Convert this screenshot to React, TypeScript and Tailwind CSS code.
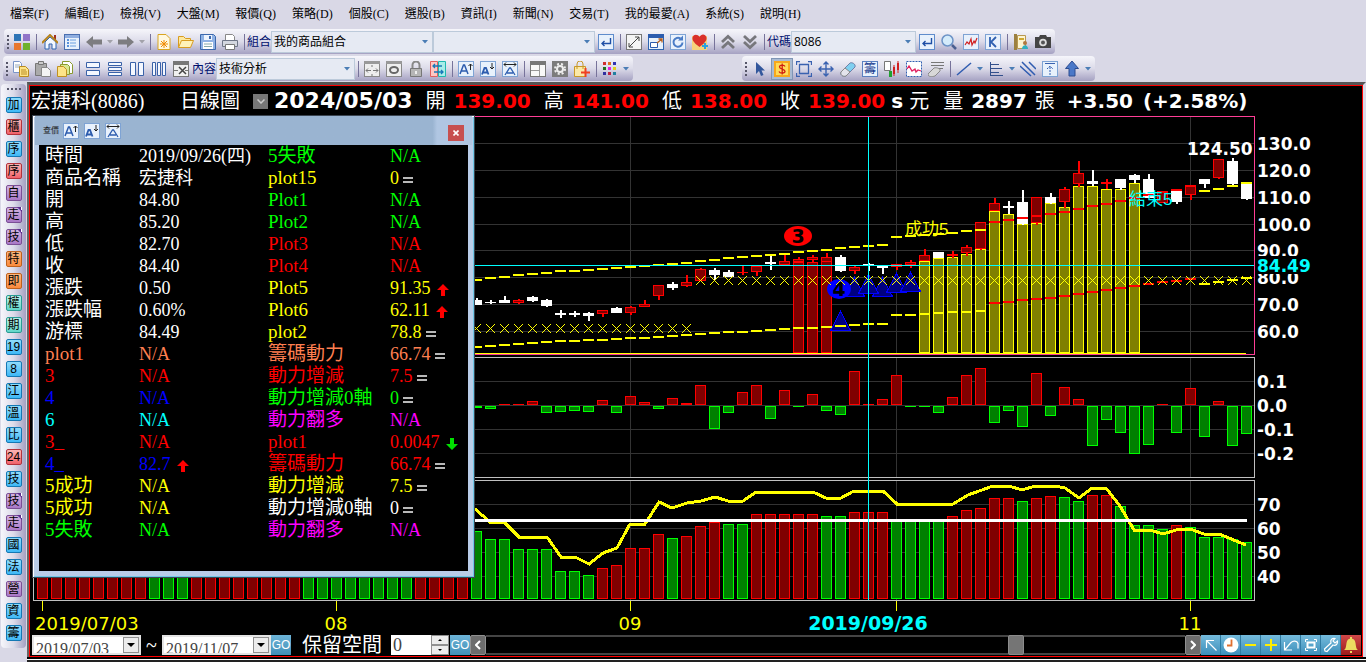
import { useState } from "react";
import type { ReactNode } from "react";

type Row = {
  label: string;
  value: string;
  color: string;
  mark?: "up" | "down" | "same";
};

const menus = [
  "檔案(F)", "編輯(E)", "檢視(V)", "大盤(M)", "報價(Q)", "策略(D)", "個股(C)",
  "選股(B)", "資訊(I)", "新聞(N)", "交易(T)", "我的最愛(A)", "系統(S)", "說明(H)",
];

const tones = {
  blue: "border-[#1478b4] from-[#8edcfb] to-[#3cb8f6]",
  red: "border-[#b4323c] from-[#f9b4b4] to-[#f0606a]",
  purple: "border-[#7b4f96] from-[#d3b4e0] to-[#a877c6]",
  orange: "border-[#c0611c] from-[#fdb880] to-[#fa8a3c]",
  teal: "border-[#2a9c94] from-[#b8f0e8] to-[#60d6c8]",
};

const sideItems: { text: string; tone: keyof typeof tones; tag?: boolean }[] = [
  { text: "加", tone: "blue" },
  { text: "櫃", tone: "red" },
  { text: "序", tone: "blue" },
  { text: "序", tone: "red" },
  { text: "自", tone: "purple" },
  { text: "走", tone: "purple", tag: true },
  { text: "技", tone: "purple", tag: true },
  { text: "特", tone: "orange" },
  { text: "即", tone: "orange" },
  { text: "權", tone: "teal" },
  { text: "期", tone: "teal" },
  { text: "19", tone: "blue" },
  { text: "8", tone: "blue" },
  { text: "江", tone: "blue" },
  { text: "溫", tone: "blue" },
  { text: "比", tone: "blue" },
  { text: "24", tone: "red" },
  { text: "技", tone: "blue" },
  { text: "技", tone: "purple", tag: true },
  { text: "走", tone: "purple", tag: true },
  { text: "國", tone: "blue" },
  { text: "法", tone: "blue" },
  { text: "營", tone: "purple" },
  { text: "資", tone: "blue" },
  { text: "籌", tone: "blue" },
];

const white = "text-white";
const yellow = "text-[#ffff00]";
const green = "text-[#00ff00]";
const red = "text-[#ff0000]";
const blue = "text-[#0000ff]";
const coral = "text-[#ff7f50]";
const magenta = "text-[#ff00ff]";

const leftRows: Row[] = [
  { label: "時間", value: "2019/09/26(四)", color: white },
  { label: "商品名稱", value: "宏捷科", color: white },
  { label: "開", value: "84.80", color: white },
  { label: "高", value: "85.20", color: white },
  { label: "低", value: "82.70", color: white },
  { label: "收", value: "84.40", color: white },
  { label: "漲跌", value: "0.50", color: white },
  { label: "漲跌幅", value: "0.60%", color: white },
  { label: "游標", value: "84.49", color: white },
  { label: "plot1", value: "N/A", color: coral },
  { label: "3", value: "N/A", color: red },
  { label: "4", value: "N/A", color: blue },
  { label: "6", value: "N/A", color: "text-[#00ffff]" },
  { label: "3_", value: "N/A", color: red },
  { label: "4_", value: "82.7", color: blue, mark: "up" },
  { label: "5成功", value: "N/A", color: yellow },
  { label: "5成功", value: "N/A", color: yellow },
  { label: "5失敗", value: "N/A", color: green },
];

const rightRows: Row[] = [
  { label: "5失敗", value: "N/A", color: green },
  { label: "plot15", value: "0", color: yellow, mark: "same" },
  { label: "Plot1", value: "N/A", color: green },
  { label: "Plot2", value: "N/A", color: green },
  { label: "Plot3", value: "N/A", color: red },
  { label: "Plot4", value: "N/A", color: red },
  { label: "Plot5", value: "91.35", color: yellow, mark: "up" },
  { label: "Plot6", value: "62.11", color: yellow, mark: "up" },
  { label: "plot2", value: "78.8", color: yellow, mark: "same" },
  { label: "籌碼動力", value: "66.74", color: coral, mark: "same" },
  { label: "動力增減", value: "7.5", color: red, mark: "same" },
  { label: "動力增減0軸", value: "0", color: green, mark: "same" },
  { label: "動力翻多", value: "N/A", color: magenta },
  { label: "plot1", value: "0.0047", color: red, mark: "down" },
  { label: "籌碼動力", value: "66.74", color: red, mark: "same" },
  { label: "動力增減", value: "7.5", color: yellow, mark: "same" },
  { label: "動力增減0軸", value: "0", color: white, mark: "same" },
  { label: "動力翻多", value: "N/A", color: magenta },
];

// one bar every 14 units, the first visible one is at x = 476
const START = 476;
const STEP = 14;
const xAt = (i: number) => START + i * STEP;

// W = down (white), R = up (red): body top, body bottom, high, low
const candles: [string, number, number, number, number][] = [
  ["W", 300, 305, 298, 305], ["W", 302, 303, 300, 304], ["W", 300, 303, 296, 303],
  ["R", 300, 303, 299, 304], ["W", 297, 301, 296, 302], ["W", 300, 306, 299, 307],
  ["W", 313, 315, 310, 318], ["W", 313, 315, 311, 317], ["W", 313, 316, 312, 321],
  ["R", 310, 314, 310, 317], ["W", 308, 313, 307, 313], ["R", 307, 313, 306, 315],
  ["R", 304, 307, 300, 307], ["R", 285, 296, 285, 300], ["W", 284, 288, 282, 290],
  ["R", 282, 286, 275, 287], ["R", 269, 281, 268, 281], ["W", 270, 275, 268, 280],
  ["W", 272, 277, 270, 277], ["R", 272, 273, 265, 275], ["R", 266, 272, 266, 276],
  ["W", 262, 264, 256, 270], ["R", 261, 265, 255, 266], ["R", 259, 262, 257, 263],
  ["R", 257, 260, 255, 262], ["R", 257, 262, 253, 262], ["W", 257, 271, 255, 272],
  ["R", 267, 271, 266, 274], ["W", 264, 266, 263, 271], ["W", 265, 268, 265, 274],
  ["R", 264, 267, 264, 270], ["R", 262, 265, 260, 268], ["R", 255, 261, 249, 261],
  ["W", 252, 258, 252, 258], ["R", 254, 256, 251, 258], ["R", 247, 253, 245, 256],
  ["R", 222, 249, 222, 250], ["R", 203, 211, 198, 211], ["W", 206, 208, 201, 214],
  ["W", 202, 224, 190, 225], ["R", 197, 223, 197, 225], ["W", 197, 203, 193, 204],
  ["R", 189, 202, 187, 208], ["R", 173, 184, 161, 187], ["W", 181, 184, 170, 186],
  ["R", 182, 184, 179, 189], ["W", 179, 188, 179, 190], ["W", 175, 180, 174, 183],
  ["W", 179, 198, 174, 198], ["R", 191, 203, 191, 203], ["W", 191, 202, 191, 204],
  ["R", 185, 195, 185, 200], ["W", 179, 184, 179, 188], ["R", 159, 178, 159, 179],
  ["W", 161, 184, 158, 185], ["W", 182, 199, 182, 200],
];

const upperBand = [
  280, 278, 277, 275, 274, 273, 271, 271, 270, 269, 268, 267, 266, 265, 264, 263, 261, 260, 258,
  257, 256, 255, 254, 252, 251, 250, 248, 247, 246, 245, 237, 236, 235, 234, 233, 231, 230, 222,
  220, 218, 216, 214, 212, 209, 206, 204, 201, 198, 195, 192, 190, 186, 191, 189, 186, 183,
];
const lowerBand = [
  347, 346, 345, 344, 343, 342, 341, 341, 340, 340, 339, 338, 338, 337, 336, 335, 334, 333, 332,
  332, 331, 330, 329, 328, 328, 327, 326, 325, 324, 324, 315, 315, 314, 313, 312, 312, 311, 303,
  302, 300, 299, 298, 296, 294, 292, 290, 288, 286, 284, 282, 281, 279, 284, 282, 280, 278,
];
const bandColor = (i: number) => (i >= 37 && i <= 51 ? "#ff0000" : "#ffff00");

const redZone: [number, number][] = [[798, 262], [812, 262], [826, 257]];
const yellowZone = [261, 258, 257, 254, 249, 211, 214, 224, 223, 203, 207, 186, 186, 189, 189, 183];

const triangles: [number, number][] = [[854, 277], [882, 277], [868, 274], [896, 273], [910, 272], [840, 311]];

const delta = [
  -3, -4, 1, 1, 4, -8, -7, -6, -7, 5, -8, 9, 3, -4, 7, 2, 20, -24, -8, 13, 20, -14, 15, -2, 11, -6,
  -10, 34, 1, 6, 30, -2, -2, -8, 8, 30, 37, -18, -6, -22, 32, -11, 18, 6, -41, -15, -28, -49, -40,
  1, -28, 17, -32, 4, -41, -29,
];

const powerTops = [
  531, 539, 539, 549, 549, 549, 571, 571, 575, 568, 565, 548, 548, 534, 538, 536, 526, 522, 524,
  524, 514, 514, 514, 514, 514, 516, 516, 512, 512, 512, 521, 521, 521, 521, 516, 510, 508, 498,
  498, 501, 498, 496, 497, 501, 495, 495, 506, 525, 525, 529, 525, 527, 537, 537, 539, 542,
];
const powerColors = "GGGGGGGGGRRRRRGRRRGGRRRRRGGRRRGGGGRRRRRGRRGGRRGGGGRGGGGG";
const earlyColors = "RRRRRRRRGGGRRRRRRRRGGGGGGGGRRRR";

const powerLine =
  "475,509 490,522 504,522 519,537 547,537 561,557 575,557 589,564 603,553 617,548 630,524 645,524 659,502 672,508 687,503 701,501 715,497 728,501 743,501 756,492 813,492 826,498 841,498 854,491 883,491 897,504 953,504 968,495 993,486 1009,486 1022,490 1035,486 1055,486 1065,488 1079,498 1092,488 1106,488 1120,506 1134,530 1150,530 1163,534 1176,530 1190,529 1204,534 1219,534 1246,545";

const priceTicks: [string, number][] = [
  ["130.0", 143], ["120.0", 170], ["110.0", 197], ["100.0", 224],
  ["90.0", 250], ["80.0", 277], ["70.0", 304], ["60.0", 331],
];
const deltaTicks: [string, number][] = [["0.1", 381], ["0.0", 405], ["-0.1", 429], ["-0.2", 453]];
const powerTicks: [string, number][] = [["70", 504], ["60", 528], ["50", 552], ["40", 576]];
const monthLines = [336, 630, 896, 1190];

function Bar({ x, top, bottom, tone }: { x: number; top: number; bottom: number; tone: string }) {
  const fill = tone === "R" ? "#800000" : tone === "G" ? "#008000" : "#808000";
  const stroke = tone === "R" ? "#ff0000" : tone === "G" ? "#00ff00" : "#ffff00";
  const h = bottom - top;
  if (h < 3) return <rect x={x - 5} y={top} width={11} height={h} fill={stroke} />;
  return <rect x={x - 4.5} y={top + 0.5} width={10} height={h - 1} fill={fill} stroke={stroke} />;
}

function Chart() {
  return (
    <svg
      viewBox="30 116 1332 518"
      className="block h-auto w-full font-['DejaVu_Sans',sans-serif]"
      shapeRendering="crispEdges"
      role="img"
    >
      {/* grid */}
      <g fill="#333333">
        {[...priceTicks, ...deltaTicks, ...powerTicks].map(([t, y]) => (
          <rect key={t + y} x={34} y={y} width={1220} height={1} />
        ))}
        {monthLines.map((x) => (
          <path key={x} d={`M${x} 117h1v236h-1zM${x} 358h1v119h-1zM${x} 481h1v119h-1z`} />
        ))}
      </g>
      <path d="M33.5 357.5H1254.5V477.5H33.5ZM33.5 480.5H1254.5V600.5H33.5Z" fill="none" stroke="#c0c0c0" />
      <path d="M33.5 116.5H1254.5V354.5H33.5Z" fill="none" stroke="#ff3e96" />

      {/* price */}
      {redZone.map(([x, y]) => (
        <Bar key={x} x={x} top={y} bottom={353} tone="R" />
      ))}
      {yellowZone.map((y, i) => (
        <Bar key={i} x={924 + i * STEP} top={y} bottom={353} tone="Y" />
      ))}
      {candles.map(([kind, top, bottom, high, low], i) => (
        <g key={i}>
          <rect x={xAt(i)} y={high} width={2} height={low - high} fill={kind === "R" ? "#ff0000" : "#ffffff"} />
          {kind === "R" ? (
            <Bar x={xAt(i)} top={top} bottom={bottom} tone="R" />
          ) : (
            <rect x={xAt(i) - 5} y={top} width={11} height={bottom - top} fill="#ffffff" />
          )}
        </g>
      ))}
      {triangles.map(([x, y]) => (
        <path
          key={x}
          d={`M${x}.5 ${y}.5L${x - 10}.5 ${y + 19}.5H${x + 10}.5Z`}
          fill="#000080"
          stroke="#0000ff"
        />
      ))}
      <ellipse cx="839" cy="289" rx="12" ry="10" fill="#0000ff" shapeRendering="auto" />
      <text x="839" y="296" textAnchor="middle" className="fill-black text-[19px] font-bold">4</text>
      {upperBand.map((y, i) => (
        <rect key={i} x={xAt(i) - 5} y={y - 1} width={11} height={2} fill={bandColor(i)} />
      ))}
      {lowerBand.map((y, i) => (
        <rect key={i} x={xAt(i) - 5} y={y - 1} width={11} height={2} fill={bandColor(i)} />
      ))}
      {candles.map((_, i) => {
        const y = i < 16 ? 328 : 280;
        return (
          <path
            key={i}
            d={`M${xAt(i) - 4} ${y - 4}l9 9M${xAt(i) + 5} ${y - 4}l-9 9`}
            stroke="#ffff00"
            fill="none"
          />
        );
      })}
      <rect x="474" y="353" width="772" height="1" fill="#ffff00" />
      <ellipse cx="798" cy="236" rx="14" ry="10" fill="#ff0000" shapeRendering="auto" />
      <text x="798" y="243" textAnchor="middle" className="fill-black text-[19px] font-bold">3</text>
      <g className="font-['Liberation_Sans','Noto_Sans_CJK_TC',sans-serif] text-[17px]">
        <text x="905" y="235" className="fill-[#ffff00]">成功5</text>
        <text x="1129" y="205" className="fill-[#00ffff]">結束5</text>
      </g>

      {/* change per day */}
      {delta.map((v, i) => (
        <Bar
          key={i}
          x={xAt(i)}
          top={v > 0 ? 405 - v : 406}
          bottom={v > 0 ? 405 : 405 - v}
          tone={v > 0 ? "R" : "G"}
        />
      ))}

      {/* power */}
      {earlyColors.split("").map((c, i) => (
        <Bar key={i} x={42 + i * STEP} top={560} bottom={599} tone={c} />
      ))}
      {powerTops.map((y, i) => (
        <Bar key={i} x={xAt(i)} top={y} bottom={599} tone={powerColors[i]} />
      ))}
      <polyline points={powerLine} fill="none" stroke="#ffff00" strokeWidth="3" />
      <rect x="474" y="519" width="773" height="3" fill="#ffffff" />

      {/* cross hair */}
      <path d="M34 265h1220v1H34zM868 117h1v483h-1z" fill="#00ffff" />

      <g className="fill-white text-[17px] font-bold">
        {[...priceTicks, ...deltaTicks, ...powerTicks].map(([t, y]) => (
          <text key={t + y} x="1257" y={y + 7}>{t}</text>
        ))}
        <rect x="1256" y="256" width="60" height="18" className="fill-black" />
        <text x="1257" y="272" className="fill-[#00ffff]">84.49</text>
        <text x="1187" y="155">124.50</text>
      </g>

      <g fill="#ffff00">
        {[42, ...monthLines].map((x) => (
          <rect key={x} x={x} y="601" width="1" height="10" />
        ))}
      </g>
      <g className="fill-[#ffff00] text-[18px]">
        <text x="35" y="630">2019/07/03</text>
        <text x="336" y="630" textAnchor="middle">08</text>
        <text x="630" y="630" textAnchor="middle">09</text>
        <text x="1190" y="630" textAnchor="middle">11</text>
      </g>
      <text x="868" y="630" textAnchor="middle" className="fill-[#00ffff] text-[19px] font-bold">
        2019/09/26
      </text>
    </svg>
  );
}

function Svg({ children }: { children: ReactNode }) {
  return (
    <svg viewBox="0 0 16 16" className="size-4 shrink-0" fill="none">
      {children}
    </svg>
  );
}

function Tool({ name, active, children }: { name: string; active?: boolean; children: ReactNode }) {
  return (
    <button
      aria-label={name}
      className={`flex h-[22px] w-[22px] shrink-0 items-center justify-center ${
        active ? "border border-[#7f95b5] bg-[#a9bbd3]" : ""
      }`}
    >
      <Svg>{children}</Svg>
    </button>
  );
}

const Sep = () => (
  <span className="flex w-[6px] shrink-0 justify-center">
    <span className="h-4 w-px bg-[#77739a]" />
  </span>
);

const Grip = () => (
  <span className="flex w-[7px] shrink-0 flex-col items-center gap-[2px]">
    <i className="size-[2px] bg-[#555568]" />
    <i className="size-[2px] bg-[#555568]" />
    <i className="size-[2px] bg-[#555568]" />
    <i className="size-[2px] bg-[#555568]" />
  </span>
);

const Caret = ({ name, muted }: { name: string; muted?: boolean }) => (
  <button aria-label={name} className="flex h-[22px] w-[10px] shrink-0 items-center justify-center">
    <svg viewBox="0 0 6 4" className="h-1 w-[6px]"><path d="M0 0h6L3 3.5z" fill={muted ? "#a2a2aa" : "#4a7db5"} /></svg>
  </button>
);

function Combo({ id, options, width }: { id: string; options: string[]; width: string }) {
  return (
    <div className={`relative shrink-0 ${width}`}>
      <select
        id={id}
        aria-label={id}
        className="block h-[22px] w-full appearance-none border border-[#bccada] bg-[#e6eaf3] pl-[2px] text-[12px] leading-5 text-black outline-none font-['Open_Sans','Noto_Sans_CJK_TC',sans-serif]"
      >
        {options.map((o) => (
          <option key={o}>{o}</option>
        ))}
      </select>
      <svg viewBox="0 0 6 4" className="pointer-events-none absolute right-[5px] top-[9px] h-1 w-[6px]">
        <path d="M0 0h6L3 3.5z" fill="#4a7db5" />
      </svg>
    </div>
  );
}

function Label({ htmlFor, children }: { htmlFor: string; children: string }) {
  return (
    <label htmlFor={htmlFor} className="w-6 shrink-0 whitespace-nowrap text-[12px] leading-4 text-[#00106e]">
      {children}
    </label>
  );
}

const barStyle =
  "flex h-[25px] shrink-0 items-center rounded-sm bg-linear-to-b from-[#f6f6fb] via-[#dcdbe9] to-[#a5a1c2]";

// small blue framed square, base of many icons
const Frame = ({ stroke = "#7ea3d4" }: { stroke?: string }) => (
  <rect x=".5" y=".5" width="15" height="15" fill="#e8f1fc" stroke={stroke} />
);

const LetterUp = () => (
  <>
    <Frame />
    <path d="M2 13 5.500 4h1L10 13M3.500 10h5" stroke="#2c5cae" strokeWidth="1.500" />
    <path d="M12.500 9V3M10.500 5l2-2 2 2" stroke="#222" />
  </>
);
const LetterDown = () => (
  <>
    <Frame />
    <path d="M2 13.500 4.500 7h1.500l2.500 6.500M3.500 11.500h4" stroke="#2c5cae" strokeWidth="1.800" />
    <path d="M12 2v6M10 6l2 2 2-2" stroke="#222" />
  </>
);
const LetterWide = () => (
  <>
    <Frame />
    <path d="M3 14l4.500-7h1L13 14M5 12h6" stroke="#2c5cae" strokeWidth="1.300" />
    <path d="M2 3.500h12M4 1.500l-2 2 2 2M12 1.500l2 2-2 2" stroke="#222" />
  </>
);
const Enter = () => (
  <>
    <Frame stroke="#5f8ccc" />
    <path d="M12.500 4v5.500H4M6.500 7 4 9.500 6.500 12" stroke="#1f4fa6" strokeWidth="1.400" />
  </>
);

function TopToolbar() {
  return (
    <div className="flex pl-1">
      <div className={`${barStyle} pr-px`}>
        <Grip />
        <Tool name="版面">
          <path d="M0 0h7v7H0z" fill="#2e75b6" /><path d="M9 0h7v7H9z" fill="#9174c8" />
          <path d="M0 9h7v7H0z" fill="#e8762d" /><path d="M9 9h7v7H9z" fill="#6fb12c" />
        </Tool>
        <Sep />
        <Tool name="首頁">
          <path d="M12 1h2v5h-2z" fill="#a03020" />
          <path d="M3 8v7h4v-5h3v5h4V8L8 3z" fill="#f4f8ff" stroke="#2f65b0" />
          <path d="M0 9 8 1l8 8" stroke="#b5821c" strokeWidth="2" />
        </Tool>
        <Tool name="清單">
          <Frame stroke="#4a6fb0" /><path d="M1 1h14v3H1z" fill="#8faee0" />
          <path d="M3 6h2M3 9h2M3 12h2" stroke="#2a70d0" strokeWidth="1.500" /><path d="M6 6h6M6 9h6M6 12h6" stroke="#6aa0e0" />
        </Tool>
        <Tool name="上一頁"><path d="M0 8 7 2v3.500h9v5H7V14z" fill="#7d7d80" /></Tool>
        <Caret name="上一頁清單" muted />
        <Tool name="下一頁"><path d="m16 8-7-6v3.500H0v5h9V14z" fill="#7d7d80" /></Tool>
        <Caret name="下一頁清單" muted />
        <Sep />
        <Tool name="新增">
          <path d="M2 .5h8l4 4v11H2z" fill="#fff8e0" stroke="#d9a520" />
          <path d="m5 7 6 6m0-6-6 6m3-7v8m-4-4h8" stroke="#f08a00" />
        </Tool>
        <Tool name="開啟">
          <path d="M.5 13.500v-11h5l2 2h5v3" fill="#fde9a0" stroke="#d89c20" />
          <path d="m.5 13.500 3-7h12l-3 7z" fill="#fff2b8" stroke="#d89c20" />
        </Tool>
        <Tool name="儲存">
          <path d="M.5.5h13l2 2v13H.5z" fill="#8fb2e4" stroke="#3c68ad" />
          <path d="M4 1h8v5H4z" fill="#eef4fd" /><path d="M9 2h2v3H9z" fill="#3c68ad" />
          <path d="M3 8h10v7H3z" fill="#fff" /><path d="M4 10h8M4 12.500h8" stroke="#8aa" />
        </Tool>
        <Tool name="列印">
          <path d="M3.500 6V.5h7l2 2V6" fill="#fff" stroke="#888" />
          <path d="M.5 6.500h15v6H.5z" fill="#d4d7e0" stroke="#6f7688" /><path d="M3.500 10.500h9v5h-9z" fill="#fff" stroke="#777" />
        </Tool>
        <Sep />
        <Label htmlFor="group">組合</Label>
        <Combo id="group" options={["我的商品組合"]} width="w-[162px]" />
        <Combo id="subgroup" options={[""]} width="w-[162px]" />
        <Tool name="確定"><Enter /></Tool>
        <Sep />
        <Tool name="展開">
          <rect x=".5" y=".5" width="15" height="15" fill="#f4f4f4" stroke="#777" />
          <path d="m3 13 10-10M9 3h4v4M3 9v4h4" stroke="#444" />
        </Tool>
        <Tool name="視窗">
          <Frame stroke="#2f65b0" /><path d="M0 0h16v4H0z" fill="#2c5cae" />
          <path d="M2.500 8.500h7v5h-7z" fill="#fff" stroke="#2c5cae" /><path d="m9 9 5-4M10.500 5H14v3.500" stroke="#b8601c" strokeWidth="1.300" />
        </Tool>
        <Tool name="重新整理">
          <Frame />
          <path d="M10.500 4.500a4.500 4.500 0 1 0 2 4" stroke="#4a7cc6" strokeWidth="2" /><path d="M8 6.500h5V1.500z" fill="#4a7cc6" />
        </Tool>
        <Tool name="加入最愛">
          <path d="M0 2h15v14H0z" fill="#f6d27c" />
          <path d="M7.500 13C3 9.500 0 7 .5 3.500 2-.5 6 .5 7.500 3 9-.5 13.500-.5 14.500 3.500c.5 3.500-2.500 6-7 9.500z" fill="#d9302a" />
          <path d="M13 9v6M10 12h6" stroke="#2aa0e0" strokeWidth="2" />
        </Tool>
        <Sep />
        <Tool name="上移"><path d="m2 8 6-5.500L14 8M2 14l6-5.500 6 5.500" stroke="#77777c" strokeWidth="2.800" /></Tool>
        <Tool name="下移"><path d="m2 2 6 5.500L14 2M2 8l6 5.500L14 8" stroke="#77777c" strokeWidth="2.800" /></Tool>
        <Sep />
        <Label htmlFor="code">代碼</Label>
        <Combo id="code" options={["8086"]} width="w-[125px]" />
        <Tool name="查詢代碼"><Enter /></Tool>
        <Tool name="搜尋">
          <circle cx="6.500" cy="6.500" r="5.500" fill="#d4ebfa" stroke="#6c93c6" strokeWidth="1.500" />
          <path d="m11 11 4 4" stroke="#4a5f90" strokeWidth="2.500" />
        </Tool>
        <Tool name="走勢圖">
          <Frame /><path d="m2 11 2-3 2 2 2-5 1 6 2-4 1 2 2-5" stroke="#d02020" strokeWidth="1.200" />
        </Tool>
        <Tool name="K線圖"><Frame /><path d="M5 3v10M11 3 6 8l5 5" stroke="#2f60b0" strokeWidth="1.800" /></Tool>
        <Sep />
        <Tool name="記事">
          <path d="M1 0h3v16H1z" fill="#9c8040" /><path d="M4.500 1.500h8v13h-8z" fill="#fdf4d0" stroke="#b89850" />
          <path d="M6 4h5v2H6z" fill="#d0a830" /><circle cx="12" cy="9" r="2" fill="#b07840" /><path d="M9 15c0-5 6-5 6 0z" fill="#30b0c0" />
        </Tool>
        <Tool name="拍照">
          <path d="M0 3h4l1-2h6l1 2h4v11H0z" fill="#444" /><circle cx="8" cy="8.500" r="3.800" fill="#ddd" /><circle cx="8" cy="8.500" r="2" fill="#555" />
        </Tool>
      </div>
    </div>
  );
}

function SecondToolbar() {
  return (
    <div className="flex gap-[109px] pl-[3px]">
      <div className={`${barStyle} pr-[2px]`}>
        <Grip />
        <Tool name="複製">
          <path d="M.5.5h6l2 2v9h-8z" fill="#fff" stroke="#7b95c8" /><path d="M2 4h5M2 6h5" stroke="#9ab" />
          <path d="M6.500 5.500h6l3 3v7h-9z" fill="#fde488" stroke="#b98b20" /><path d="M8 9h5M8 11h6M8 13h6" stroke="#b98b20" />
        </Tool>
        <Tool name="貼上">
          <path d="M.5 2.500h11v12H.5z" fill="#aaa" stroke="#777" /><path d="M3.500.5h5v3h-5z" fill="#ccc" stroke="#777" />
          <path d="M6.500 6.500h6l3 3v6h-9z" fill="#f4f4f4" stroke="#888" />
        </Tool>
        <Tool name="複製版面">
          <path d="M5.500.5h7l3 3v9h-10z" fill="#fff" stroke="#8a9a30" /><path d="M3.500 3.500h7l2 2v8h-9z" fill="#d8e890" stroke="#8a9a30" />
          <path d="M.5 5.500h6l3 3v7h-9z" fill="#fde488" stroke="#c09020" />
        </Tool>
        <Sep />
        <Tool name="上下分割"><path d="M1.500 1.500h13v5h-13zM1.500 9.500h13v5h-13z" fill="#f4f8ff" stroke="#3a62a8" /></Tool>
        <Tool name="三列"><path d="M1.500 1.500h13v3h-13zM1.500 6.500h13v3h-13zM1.500 11.500h13v3h-13z" fill="#f4f8ff" stroke="#3a62a8" /></Tool>
        <Tool name="左右分割"><path d="M1.500 1.500h5v13h-5zM9.500 1.500h5v13h-5z" fill="#f4f8ff" stroke="#3a62a8" /></Tool>
        <Tool name="三欄"><path d="M1.500 1.500h3v13h-3zM6.500 1.500h3v13h-3zM11.500 1.500h3v13h-3z" fill="#f4f8ff" stroke="#3a62a8" /></Tool>
        <Tool name="關閉視窗">
          <rect x=".5" y=".5" width="15" height="15" fill="#f0f0f0" stroke="#777" /><path d="M0 0h16v4H0z" fill="#777" />
          <path d="m6 6 7 7m0-7-7 7" stroke="#444" strokeWidth="1.500" /><path d="M1 9.500h4M12 9.500h3" stroke="#777" />
        </Tool>
        <Label htmlFor="content">內容</Label>
        <Combo id="content" options={["技術分析"]} width="w-[139px]" />
        <Sep />
        <Tool name="調整寬度">
          <rect x=".5" y=".5" width="15" height="15" fill="#eee" stroke="#888" /><path d="M0 0h16v3H0z" fill="#999" />
          <path d="M8 4v2M8 13v2M7 9.500H2m2-2-2 2 2 2M9 9.500h5m-2-2 2 2-2 2" stroke="#777" />
        </Tool>
        <Tool name="顯示">
          <rect x=".5" y=".5" width="15" height="15" fill="#eee" stroke="#888" /><path d="M0 0h16v3H0z" fill="#999" />
          <ellipse cx="8" cy="9" rx="4" ry="3" stroke="#666" strokeWidth="2" />
        </Tool>
        <Tool name="鎖定">
          <path d="M4.500 8V4a3.500 3.500 0 0 1 7 0v4" stroke="#888" strokeWidth="2" /><path d="M2.500 7.500h11v8h-11z" fill="#b5b5b5" stroke="#777" />
          <path d="M8 10v3" stroke="#eee" strokeWidth="2" />
        </Tool>
        <Tool name="連動">
          <path d="M.5.5h7v15h-7z" fill="#ffc8c4" stroke="#e06060" /><path d="M8.500.5h7v15h-7z" fill="#a8ece8" stroke="#20b8b0" />
          <path d="M12 5H3m2-2L3 5l2 2M4 11h9m-2-2 2 2-2 2" stroke="#1878b8" strokeWidth="1.300" />
        </Tool>
        <Sep />
        <Tool name="放大字型"><LetterUp /></Tool>
        <Tool name="縮小字型"><LetterDown /></Tool>
        <Tool name="字型寬度"><LetterWide /></Tool>
        <Sep />
        <Tool name="版面配置">
          <rect x=".5" y=".5" width="15" height="15" fill="#f8f8f8" stroke="#777" /><path d="M0 0h16v4H0z" fill="#777" />
          <path d="M9.500 4v11M1 9.500h8" stroke="#999" />
        </Tool>
        <Tool name="設定">
          <path d="M0 0h16v16H0z" fill="#7c7c7c" />
          <circle cx="8" cy="8" r="3" stroke="#eee" strokeWidth="2" /><circle cx="8" cy="8" r="5" stroke="#eee" strokeWidth="2" strokeDasharray="2 2" />
        </Tool>
        <Tool name="下單">
          <path d="M.5 5.500h11v10H.5z" fill="#fbe9a8" stroke="#c89828" /><path d="M3 8V3a3 3 0 0 1 6 0v5" stroke="#c89828" />
          <path d="M11.500 7v9M7 11.500h9" stroke="#f04020" strokeWidth="2" />
        </Tool>
        <Sep />
        <Tool name="色彩">
          <path d="M1 1h3v3H1z" fill="#d03030" /><path d="M6 1h3v3H6z" fill="#e07020" /><path d="M11 1h3v3h-3z" fill="#3030b0" />
          <path d="M1 6h3v3H1z" fill="#207020" /><path d="M6 6h3v3H6z" fill="#e020e0" /><path d="M11 6h3v3h-3z" fill="#e0d020" />
          <path d="M1 11h3v3H1z" fill="#3030a0" /><path d="M6 11h3v3H6z" fill="#c02040" /><path d="M11 11h3v3h-3z" fill="#2080a0" />
        </Tool>
        <Caret name="色彩清單" />
      </div>

      <div className={`${barStyle} pr-[2px]`}>
        <Grip />
        <Tool name="選取"><path d="M4 1v12l3-3 2 5 2.500-1-2-4.500H13z" fill="#33579c" /></Tool>
        <Tool name="報價線" active>
          <path d="M0 0h16v16H0z" fill="#f7a81c" /><path d="M2 2h12v12H2z" fill="#ffdc58" />
          <path d="M11 5.500C10 3.500 5.500 3.800 5.500 6S11 8 11 10.300 6 12.800 5 10.500M8.200 2.500v11" stroke="#d02010" strokeWidth="1.300" />
        </Tool>
        <Tool name="範圍">
          <path d="M3.500 3.500h9v9h-9zM.5 4V.5H4M12 .5h3.500V4M15.500 12v3.500H12M4 15.500H.5V12" stroke="#3a62b0" strokeWidth="1.300" />
        </Tool>
        <Tool name="移動">
          <path d="M8 1v14M1 8h14M5.500 3.500 8 1l2.500 2.500M5.500 12.500 8 15l2.500-2.500M3.500 5.500 1 8l2.500 2.500M12.500 5.500 15 8l-2.500 2.500" stroke="#3a62b0" strokeWidth="1.400" />
        </Tool>
        <Tool name="橡皮擦">
          <path d="m1 11 9-9c2-1 6 1 5 4l-9 9c-3 1-6-1-5-4z" fill="#80d0f0" stroke="#7080a8" /><path d="m1 11 4-4 5 4-4 4c-3 1-6-1-5-4z" fill="#e4e4ec" stroke="#888" />
        </Tool>
        <button aria-label="籌碼" className="flex w-[22px] justify-center">
          <span className="flex size-4 items-center justify-center border border-[#5a80c0] bg-[#e8f1fc] text-[12px] leading-none text-[#1c4090]">籌</span>
        </button>
        <Tool name="K棒">
          <path d="M.5.5h6v9h-6z" fill="#fff" stroke="#777" /><path d="M5 10h3v6H5z" fill="#20a030" />
          <path d="M9 6h2v7H9zM13 2h2v7h-2z" fill="#d02020" /><path d="M10 4v11M14 0v12" stroke="#d02020" />
        </Tool>
        <Tool name="區間走勢">
          <rect x=".5" y=".5" width="15" height="15" fill="#fff" stroke="#3060b0" strokeDasharray="2 1" />
          <path d="m1 8 2-3 3 5 3-2 1 3 2-2 3 1" stroke="#e02060" strokeWidth="1.300" />
        </Tool>
        <Tool name="刪除線">
          <path d="M3 1.500h13M3 4.500h13M5 7.500h10" stroke="#777" /><path d="m0 13 6-6c3-1 7 1 6 3l-5 5c-3 1-7 1-7-2z" fill="#d8d8d8" stroke="#888" />
        </Tool>
        <Sep />
        <Tool name="直線"><path d="M1 14 15 2" stroke="#2f5cb0" strokeWidth="1.500" /></Tool>
        <Caret name="直線清單" />
        <Tool name="水平線"><path d="M2.500 1v14M2 3.500h9M2 7.500h12M2 11.500h9M2 14.500h13" stroke="#33508c" /></Tool>
        <Caret name="水平線清單" />
        <Tool name="平行線"><path d="m0 5 11 10M2 1l13 13M9 1l7 7" stroke="#2f5cb0" strokeWidth="1.500" /></Tool>
        <Tool name="上緣"><Frame /><path d="M3 2.500h10" stroke="#3a62b0" /><path d="M8 14V5M5 8l3-3 3 3" stroke="#2f5cb0" strokeDasharray="2 1" /></Tool>
        <Tool name="箭號"><path d="m8 0 6.500 7.500h-3.500V15H5V7.500H1.500z" fill="#4a78c8" stroke="#2c4c90" /></Tool>
        <Caret name="箭號清單" />
      </div>
    </div>
  );
}

function Mark({ kind }: { kind: Row["mark"] }) {
  if (!kind) return null;
  if (kind === "same")
    return (
      <svg viewBox="0 0 10 12" className="ml-1 inline h-3 w-[10px]">
        <path d="M0 3h10v2H0zM0 7h10v2H0z" fill="#b8b8b8" />
      </svg>
    );
  return (
    <svg viewBox="0 0 12 12" className="ml-[6px] inline size-3">
      {kind === "up" ? (
        <path d="m6 0 6 6H8v6H4V6H0z" fill="#ff0000" />
      ) : (
        <path d="m6 12 6-6H8V0H4v6H0z" fill="#00e000" />
      )}
    </svg>
  );
}

function QuoteWindow({ onClose }: { onClose: () => void }) {
  return (
    <div className="absolute left-[2px] top-[29px] w-[443px] border border-[#3a4450] bg-[#b9cde8] px-[6px] pb-[6px] shadow-[inset_1px_1px_0_#ffffff,inset_-1px_-1px_0_#6fc8e8]">
      <div className="-mx-[4px] flex h-[29px] items-center gap-[5px] bg-linear-to-r from-[#9ab4d1] from-[91%] to-[#b0c6e2] to-[92%] pl-2 pr-2 pt-px">
        <span className="w-[15px] whitespace-nowrap text-[8px] leading-none text-[#222222]">查價</span>
        <button aria-label="放大字型"><Svg><LetterUp /></Svg></button>
        <button aria-label="縮小字型"><Svg><LetterDown /></Svg></button>
        <button aria-label="字型寬度"><Svg><LetterWide /></Svg></button>
        <button
          onClick={onClose}
          aria-label="關閉"
          className="ml-auto mt-1 flex size-4 items-center justify-center bg-[#c75050]"
        >
          <svg viewBox="0 0 6 6" className="size-[6px]"><path d="m.5.5 5 5m0-5-5 5" stroke="#fff" strokeWidth="1.600" /></svg>
        </button>
      </div>
      <div className="bg-black pb-[30px] pl-[6px]">
        <table className="w-full table-fixed">
          <colgroup>
            <col className="w-[94px]" />
            <col className="w-[129px]" />
            <col className="w-[122px]" />
            <col />
          </colgroup>
          <tbody>
            {leftRows.map((l, i) => {
              const r = rightRows[i];
              return (
                <tr key={i} className="h-[22px] whitespace-nowrap leading-[22px]">
                  <td className={`text-[19px] ${l.color}`}>{l.label}</td>
                  <td className={`text-[18px] ${l.color}`}>{l.value}<Mark kind={l.mark} /></td>
                  <td className={`text-[19px] ${r.color}`}>{r.label}</td>
                  <td className={`text-[18px] ${r.color}`}>{r.value}<Mark kind={r.mark} /></td>
                </tr>
              );
            })}
          </tbody>
        </table>
      </div>
    </div>
  );
}

function DateSelect({ name, value }: { name: string; value: string }) {
  return (
    <div className="relative w-[109px] shrink-0">
      <select
        aria-label={name}
        className="block h-5 w-full appearance-none border-2 border-[#e4e4e4] bg-white pl-[2px] pt-1 text-[16px] leading-4 text-[#444444] outline-none"
      >
        <option>{value}</option>
      </select>
      <span className="pointer-events-none absolute right-[2px] top-[2px] flex h-4 w-4 items-center justify-center border border-[#909090] bg-[#ececec]">
        <svg viewBox="0 0 8 4" className="h-1 w-2"><path d="M0 0h8L4 4z" fill="#000" /></svg>
      </span>
    </div>
  );
}

const Go = () => (
  <button className="flex h-5 w-5 shrink-0 items-center justify-center bg-linear-to-b from-[#6db4d8] to-[#4090b8] text-[12px] leading-none text-white font-['Liberation_Sans',sans-serif]">
    GO
  </button>
);

function ChartButton({ name, children }: { name: string; children: ReactNode }) {
  return (
    <button
      aria-label={name}
      className="flex h-5 w-5 shrink-0 items-center justify-center border-r border-[#2f7ca4] bg-linear-to-b from-[#74bbdc] to-[#3b8fba]"
    >
      <Svg>{children}</Svg>
    </button>
  );
}

function BottomBar() {
  const [space, setSpace] = useState(0);
  return (
    <div className="flex h-[22px] items-center pl-[2px] pr-px">
      <DateSelect name="起始日期" value="2019/07/03" />
      <span className="w-[21px] shrink-0 text-center text-[20px] leading-5 text-white">~</span>
      <DateSelect name="結束日期" value="2019/11/07" />
      <Go />
      <label htmlFor="space" className="ml-[11px] w-[89px] shrink-0 whitespace-nowrap text-[20px] leading-5 text-white">
        保留空間
      </label>
      <div className="flex shrink-0">
        <input
          id="space"
          value={space}
          onChange={(e) => setSpace(Number(e.target.value) || 0)}
          className="h-5 w-10 bg-white pl-[2px] text-[18px] leading-5 text-[#444444] outline-none"
        />
        <span className="flex w-[18px] flex-col">
          <button aria-label="增加" onClick={() => setSpace(space + 1)} className="flex h-[10px] items-center justify-center border border-[#909090] bg-[#ececec]">
            <svg viewBox="0 0 4 2" className="h-[2px] w-1"><path d="m0 2 2-2 2 2z" fill="#000" /></svg>
          </button>
          <button aria-label="減少" onClick={() => setSpace(space - 1)} className="flex h-[10px] items-center justify-center border border-[#909090] bg-[#ececec]">
            <svg viewBox="0 0 4 2" className="h-[2px] w-1"><path d="m0 0 2 2 2-2z" fill="#000" /></svg>
          </button>
        </span>
      </div>
      <span className="ml-px"><Go /></span>
      <button aria-label="往左" className="flex h-5 w-4 shrink-0 items-center justify-center rounded-xs border border-[#909090] bg-[#6c6c6c]">
        <svg viewBox="0 0 6 10" className="h-[10px] w-[6px]"><path d="M5 1 1 5l4 4" stroke="#fff" strokeWidth="2" fill="none" /></svg>
      </button>
      <div className="flex h-5 flex-1 border-y-2 border-[#444444] bg-black">
        <span className="flex-[520]" />
        <span className="-my-[2px] w-4 rounded-xs border border-[#8c8c8c] bg-[#757575]" />
        <span className="flex-[160]" />
      </div>
      <button aria-label="往右" className="flex h-5 w-4 shrink-0 items-center justify-center rounded-xs border border-[#909090] bg-[#6c6c6c]">
        <svg viewBox="0 0 6 10" className="h-[10px] w-[6px]"><path d="m1 1 4 4-4 4" stroke="#fff" strokeWidth="2" fill="none" /></svg>
      </button>
      <ChartButton name="游標"><path d="M3.500 11V3.500H11M4 4l9.500 9.500" stroke="#fff" strokeWidth="1.200" /></ChartButton>
      <ChartButton name="時間"><circle cx="8" cy="8" r="7.500" fill="#fff" /><path d="M8.500 2.500v6H4" stroke="#e07030" strokeWidth="1.800" /></ChartButton>
      <ChartButton name="縮小"><path d="M2 8h11" stroke="#ffee00" strokeWidth="2" /></ChartButton>
      <ChartButton name="放大"><path d="M2 8h12M8 2v12" stroke="#ffee00" strokeWidth="2" /></ChartButton>
      <ChartButton name="復原"><path d="M1.500 5v8H9M2 12.500l6-7c2-2 6-2 7 1v5" stroke="#fff" strokeWidth="1.200" /></ChartButton>
      <ChartButton name="全螢幕">
        <path d="M4.500 5.500h7v5h-7z" stroke="#fff" strokeWidth="2" /><path d="M2.500 5V2.500H5M11 2.500h2.500V5M13.500 11v2.500H11M5 13.500H2.500V11" stroke="#fff" />
      </ChartButton>
      <ChartButton name="工具">
        <path d="m2 14-.5-2L8 6c-1-3 1-5 4-4.500L10 4l2 2 2.500-2c.5 3-1.500 5-4.500 4l-6 6.500z" stroke="#fff" strokeWidth="1.200" />
      </ChartButton>
      <button aria-label="警示" className="flex h-5 w-5 shrink-0 items-center justify-center bg-linear-to-b from-[#d04848] to-[#9c1818]">
        <Svg>
          <path d="M1 13c2-1 2-4 2.500-7C4 3 5.500 2 7 1.800V0h2v1.800C10.500 2 12 3 12.500 6c.5 3 .5 6 2.500 7z" fill="#ecdc60" />
          <path d="M7 14h2v2H7z" fill="#ecdc60" />
        </Svg>
      </button>
    </div>
  );
}

function Quote({ label, value }: { label: string; value: string }) {
  return (
    <span className="flex items-center gap-2">
      <span>{label}</span>
      <b className="text-[#ff0000] font-['DejaVu_Sans',sans-serif]">{value}</b>
    </span>
  );
}

function QuoteHeader() {
  return (
    <div className="flex h-[30px] items-center overflow-hidden whitespace-nowrap pl-px text-[20px] leading-none text-white">
      <span className="w-[149px] shrink-0">宏捷科(8086)</span>
      <span className="w-[73px] shrink-0">日線圖</span>
      <button aria-label="週期" className="flex h-[15px] w-[15px] shrink-0 items-center justify-center bg-[#777777]">
        <svg viewBox="0 0 8 5" className="h-[5px] w-2"><path d="m.5.5 3.500 3.500L7.500.5" stroke="#ccc" strokeWidth="1.500" fill="none" /></svg>
      </button>
      <b className="ml-[6px] mr-[13px] shrink-0 text-[22px] font-['DejaVu_Sans',sans-serif]">2024/05/03</b>
      <div className="flex shrink-0 gap-[13px]">
        <Quote label="開" value="139.00" />
        <Quote label="高" value="141.00" />
        <Quote label="低" value="138.00" />
        <Quote label="收" value="139.00" />
      </div>
      <b className="ml-[6px] mr-[6px] font-['DejaVu_Sans',sans-serif]">s</b>
      <span>元</span>
      <span className="ml-[14px] mr-2">量</span>
      <b className="mr-2 font-['DejaVu_Sans',sans-serif]">2897</b>
      <span>張</span>
      <b className="ml-3 font-['DejaVu_Sans',sans-serif]">+3.50</b>
      <b className="ml-[10px] font-['DejaVu_Sans',sans-serif]">(+2.58%)</b>
    </div>
  );
}

export default function App() {
  const [showQuote, setShowQuote] = useState(true);

  return (
    <div className="flex min-h-screen flex-col overflow-x-hidden bg-[#d9d8e6] text-black font-['Liberation_Serif','Noto_Sans_CJK_TC',serif]">
      <nav className="flex h-[29px] items-center gap-4 whitespace-nowrap pb-[2px] pl-[10px] text-[12px] leading-4">
        {menus.map((m) => (
          <button key={m}>{m}</button>
        ))}
      </nav>
      <div className="flex flex-col gap-[2px] pb-px">
        <TopToolbar />
        <SecondToolbar />
      </div>

      <div className="flex flex-1">
        <aside className="w-[27px] shrink-0 pl-px pt-[2px]">
          <div className="flex w-[25px] flex-col items-center rounded-sm bg-linear-to-r from-[#f6f6fb] via-[#dcdbe9] to-[#a5a1c2] pb-1">
            <div className="flex h-[10px] items-center gap-[2px]">
              <i className="size-[2px] bg-[#555568]" />
              <i className="size-[2px] bg-[#555568]" />
              <i className="size-[2px] bg-[#555568]" />
              <i className="size-[2px] bg-[#555568]" />
            </div>
            {sideItems.map((s, i) => (
              <button key={i} className="relative flex h-[22px] items-center">
                <span
                  className={`flex size-4 items-center justify-center rounded-xs border bg-linear-to-b text-[12px] leading-none text-black font-['Liberation_Sans','Noto_Sans_CJK_TC',sans-serif] ${tones[s.tone]}`}
                >
                  {s.text}
                </span>
                {s.tag && (
                  <svg viewBox="0 0 5 5" className="absolute right-0 top-[3px] size-[5px]">
                    <path d="M0 0h5v5z" fill="#5c2c90" />
                    <path d="M4 0h1v3H4z" fill="#fff" />
                  </svg>
                )}
              </button>
            ))}
          </div>
        </aside>

        <main className="min-w-0 flex-1">
          <div className="border-l-2 border-r-3 border-t-3 border-l-[#666666] border-r-[#d9d8e6] border-t-[#555555]">
            <div className="relative border border-[#ff0000] bg-black">
              <QuoteHeader />
              <Chart />
              <BottomBar />
              {showQuote && <QuoteWindow onClose={() => setShowQuote(false)} />}
            </div>
          </div>
          <div className="h-[2px] bg-black" />
          <div className="h-px bg-white" />
          <div className="h-[2px] bg-[#222222]" />
        </main>
      </div>
    </div>
  );
}
